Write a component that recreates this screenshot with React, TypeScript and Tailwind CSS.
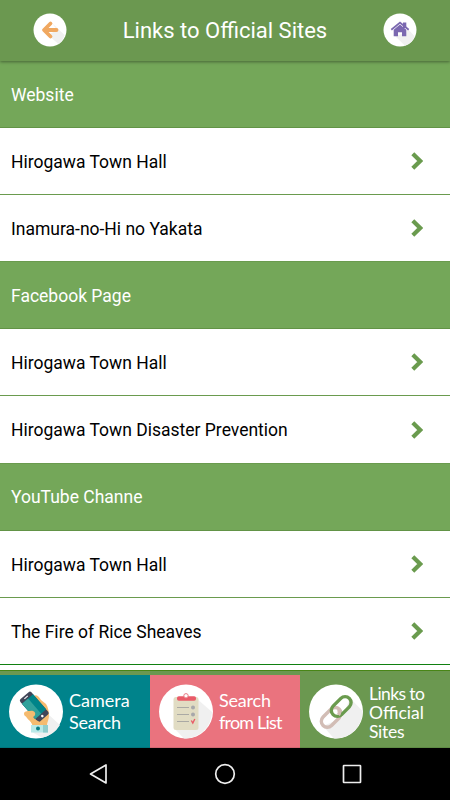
interface Section {
  title: string;
  links: string[];
}

const sections: Section[] = [
  { title: "Website", links: ["Hirogawa Town Hall", "Inamura-no-Hi no Yakata"] },
  { title: "Facebook Page", links: ["Hirogawa Town Hall", "Hirogawa Town Disaster Prevention"] },
  { title: "YouTube Channe", links: ["Hirogawa Town Hall", "The Fire of Rice Sheaves"] },
];

function BackIcon() {
  return (
    <svg className="w-[34px] h-[34px]" viewBox="0 0 34 34">
      <circle cx="17" cy="17" r="16.500" fill="#fff" />
      <path d="M19 10L31.500 22A16.500 16.500 0 0 1 25.500 31L15 22L24 17Z" fill="#f0f0f0" />
      <path d="M17.500 10.500L11 17L17.500 23.500M12 17H23.500" fill="none" stroke="#f0a860" strokeWidth="3.800" strokeLinecap="round" strokeLinejoin="round" />
    </svg>
  );
}

function HomeIcon() {
  return (
    <svg className="w-[34px] h-[34px]" viewBox="0 0 34 34">
      <circle cx="17" cy="17" r="16.500" fill="#fff" />
      <path d="M24.500 15.500L31.800 23.500A16.500 16.500 0 0 1 22 32.700L12 23L23 20Z" fill="#f0f0f0" />
      <path d="M20 9.500H23.300V15H20Z" fill="#7b68b0" />
      <path d="M8.300 16.800L17 9.600L25.700 16.800" fill="none" stroke="#7b68b0" strokeWidth="1.800" />
      <path d="M10.700 16.700L17 11.500L23.300 16.700V23.200H19V19.300H15V23.200H10.700Z" fill="#7b68b0" />
    </svg>
  );
}

function Chevron() {
  return (
    <svg className="w-3 h-[18px]" viewBox="0 0 12 18">
      <path d="M1.800 1.800L9.200 9L1.800 16.200" fill="none" stroke="#6a9b4e" strokeWidth="4.200" />
    </svg>
  );
}

function CameraIcon() {
  return (
    <svg className="w-[54px] h-[55px] shrink-0" viewBox="0 0 54 55">
      <circle cx="27" cy="27.500" r="27" fill="#fff" />
      <path d="M39 30L51 41A27 27 0 0 1 33 53.800L23 48L38 41Z" fill="#f0f0f0" />
      <path d="M25 12C28 10 30 13 32 16L37 20C39 23 40 28 40 31C40 36 38 38 38 42H24L18 31Z" fill="#f5bb70" />
      {/* phone */}
      <g transform="rotate(-41 25.300 22.800)">
        <rect x="18" y="8" width="14.600" height="29.600" rx="2" fill="#414659" />
        <path d="M18 12.500H32.600V32.500H18Z" fill="#008489" />
        <path d="M18 12.500H26L26 32.500H18Z" fill="#31a19b" />
        <path d="M23 10.300H27.500" stroke="#fff" />
        <circle cx="25.300" cy="35" r="1.300" fill="#fff" />
      </g>
      {/* thumb and palm */}
      <path d="M15 30C15 27 18 27 21 27C25 26 27 29 26 31C25 33 23 33 24 34.500L31 38C34 39 36 37 38 36V42H24C24 38 20 37 18 34C17 32 15 32 15 30Z" fill="#f5bb70" />
      <path d="M22 41H39V48.500H22Z" fill="#b9e9e8" />
      <path d="M34 41H39V48.500H34Z" fill="#91cdcd" />
      <circle cx="29" cy="44.500" r="2" fill="#087c82" />
    </svg>
  );
}

function ListIcon() {
  return (
    <svg className="w-[54px] h-[55px] shrink-0" viewBox="0 0 54 55">
      <circle cx="27" cy="27.500" r="27" fill="#fff" />
      <path d="M37 14L53 28A27 27 0 0 1 25 54.400L16 45Z" fill="#f0f0f0" />
      <rect x="14.500" y="13" width="25" height="33" rx="2.500" fill="#e1dcc3" />
      <rect x="18" y="12.200" width="19" height="4.500" rx="1.800" fill="#e95b68" />
      <circle cx="27" cy="11.800" r="2.200" fill="#fff" stroke="#e97a82" />
      <path d="M18 23.500H30M18 30.500H30M18 37.500H30" stroke="#aaa9a4" />
      <circle cx="34" cy="23.500" r="2" fill="#a7a8aa" />
      <circle cx="34" cy="30.500" r="2" fill="#a7a8aa" />
      <path d="M32.300 36.500L33.800 39L35.800 35" fill="none" stroke="#e95b68" strokeWidth="1.400" />
    </svg>
  );
}

function LinkIcon() {
  return (
    <svg className="w-[54px] h-[55px] shrink-0" viewBox="0 0 54 55">
      <circle cx="27" cy="27.500" r="27" fill="#fff" />
      <path d="M41 14L53.500 27A27 27 0 0 1 25 54.400L14 42L33 34Z" fill="#f0f0f0" />
      <g fill="none" strokeWidth="3.400">
        <rect x="10.700" y="27.400" width="23" height="12" rx="6" transform="rotate(-45 22.200 33.400)" stroke="#d2bdb5" />
        <rect x="20.700" y="16.500" width="23" height="12" rx="6" transform="rotate(-45 32.200 22.500)" stroke="#6a9b4e" />
        <path d="M29.500 25.500Q31.500 28 29.500 31" stroke="#d2bdb5" />
      </g>
    </svg>
  );
}

function App() {
  return (
    <div className="h-screen w-full bg-white flex flex-col overflow-hidden font-[Roboto,sans-serif]">
      <header className="h-[61px] shrink-0 bg-[#6b9850] px-[33px] flex items-center justify-between z-10 shadow-[0_1px_3px_rgba(0,0,0,0.4)]">
        <button aria-label="Back" className="-mt-0.5"><BackIcon /></button>
        <h1 className="text-[22px] text-white">Links to Official Sites</h1>
        <button aria-label="Home" className="-mt-0.5"><HomeIcon /></button>
      </header>

      <main className="flex-1 min-h-0 text-[17.500px]">
        {sections.map((section) => (
          <section key={section.title}>
            <h2 className="h-[67.100px] px-[11px] pt-0.5 flex items-center bg-[#74a759] border-b border-[#629346] text-white">
              {section.title}
            </h2>
            {section.links.map((link, i) => (
              <a
                key={i}
                className={`h-[67.100px] pl-[11px] pr-[27px] flex items-center justify-between border-b text-black ${
                  section.title === "YouTube Channe" && i === 1 ? "border-[#118011]" : "border-[#6a9b4e]"
                }`}
              >
                <span className="pt-0.5">{link}</span>
                <Chevron />
              </a>
            ))}
          </section>
        ))}
      </main>

      <nav className="h-[78px] shrink-0 flex border-t border-[#488516] bg-[#6b9850] pt-1 text-white text-[18px] leading-[22px] font-[Lato,sans-serif]">
        <button className="w-[150px] pl-[9px] flex items-center gap-1.5 bg-[#00838b] text-left border-b border-[#00757c]">
          <CameraIcon />
          <span className="flex flex-col">
            <span>Camera</span>
            <span className="tracking-[-0.2px]">Search</span>
          </span>
        </button>
        <button className="w-[150px] pl-[9px] flex items-center gap-1.5 bg-[#ea737e] text-left border-b border-[#d26771]">
          <ListIcon />
          <span className="flex flex-col">
            <span className="tracking-[-0.2px]">Search</span>
            <span className="tracking-[-0.800px]">from List</span>
          </span>
        </button>
        <button className="w-[150px] pl-[9px] flex items-center gap-1.5 bg-[#6b9850] text-left border-b border-[#5e8a44] text-[17.500px] leading-[19px]">
          <LinkIcon />
          <span className="flex flex-col pt-0.5">
            <span className="tracking-[-0.600px]">Links to</span>
            <span>Official</span>
            <span className="tracking-[-0.300px]">Sites</span>
          </span>
        </button>
      </nav>

      <footer className="h-[52px] shrink-0 bg-black flex items-center justify-between px-[88px]">
        <svg className="w-5 h-[22px]" viewBox="0 0 20 22">
          <path d="M18 2V20L2.500 11Z" fill="none" stroke="#eee" strokeWidth="1.700" strokeLinejoin="round" />
        </svg>
        <svg className="w-[22px] h-[22px]" viewBox="0 0 22 22">
          <circle cx="11" cy="11" r="9.300" fill="none" stroke="#eee" strokeWidth="1.700" />
        </svg>
        <svg className="w-5 h-5" viewBox="0 0 20 20">
          <rect x="1.500" y="1.500" width="17" height="17" rx=".5" fill="none" stroke="#eee" strokeWidth="1.700" />
        </svg>
      </footer>
    </div>
  );
}

export default App;
